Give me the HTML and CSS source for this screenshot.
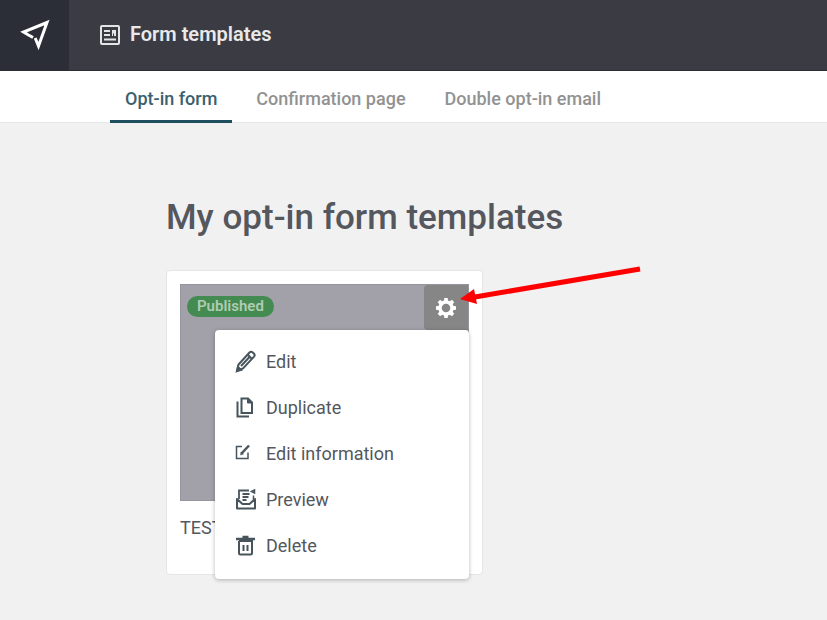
FILE: index.html
```html
<!DOCTYPE html>
<html lang="en">
<head>
<meta charset="utf-8">
<title>Form templates</title>
<link rel="stylesheet" href="styles.css">
</head>
<body>
<header class="topbar">
  <a class="brand" href="#" aria-label="Home">
    <svg width="32" height="32" viewBox="0 0 32 32" fill="none" stroke="#fff" stroke-width="3"><path d="M14 18.500 9.500 16 4.500 13 28 3.500 19.500 27 16.200 19"/></svg>
  </a>
  <div class="section">
    <svg width="20" height="20" viewBox="0 0 20 20" fill="none" stroke="#e4e4e6" stroke-width="2"><rect x="1" y="1" width="18" height="18" rx="1"/><path d="M4 6h6M4 10h6M4 14.500h12" /><path d="M12 5h4v6h-4z" fill="#e4e4e6" stroke="none"/><path d="M13.500 8.500v3" stroke="#3b3c43" stroke-width="1"/></svg>
    <span class="section-title">Form templates</span>
  </div>
</header>
<nav class="tabs">
  <a class="tab active" href="#">Opt-in form</a>
  <a class="tab" href="#">Confirmation page</a>
  <a class="tab" href="#">Double opt-in email</a>
</nav>
<main class="content">
  <h1>My opt-in form templates</h1>
  <article class="card">
    <div class="thumb">
      <span class="badge">Published</span>
      <button class="gear" aria-label="Template options">
        <svg width="22" height="22" viewBox="-11 -11 22 22"><g fill="#fff"><path id="tooth" d="M-2.200-6 -1.700-10H1.700L2.200-6z"/><use href="#tooth" transform="rotate(45)"/><use href="#tooth" transform="rotate(90)"/><use href="#tooth" transform="rotate(135)"/><use href="#tooth" transform="rotate(180)"/><use href="#tooth" transform="rotate(225)"/><use href="#tooth" transform="rotate(270)"/><use href="#tooth" transform="rotate(315)"/></g><circle r="6" fill="none" stroke="#fff" stroke-width="3.400"/></svg>
      </button>
    </div>
    <div class="name">TEST</div>
    <div class="menu">
      <button class="item"><svg width="22" height="24" viewBox="0 0 22 24" fill="none" stroke="#47545c" stroke-width="2"><path d="M2 22 3.500 15.500 14.500 3.500Q16 2 17.500 3.300L19 4.700Q20.300 6.200 19 7.700L8 19.500zM12.500 5.500l4.500 4.500M6 17 15 7.500"/><path d="M2 22l1-4 3 3z" fill="#47545c"/></svg>Edit</button>
      <button class="item"><svg width="22" height="24" viewBox="0 0 22 24" fill="none" stroke="#47545c" stroke-width="2"><path d="M6.500 3.500H13l4 4v10.500H6.500z"/><path d="M12.500 3.500v4.500H17z" fill="#47545c" stroke-width="1"/><path d="M2.500 6.500v15H14"/></svg>Duplicate</button>
      <button class="item"><svg width="22" height="24" viewBox="0 0 22 24" fill="none" stroke="#47545c" stroke-width="1.500"><path d="M7 5.500H1.500v12h11.500V11.500"/><path d="M6.500 12.500 14 4.500" stroke-width="2.500"/><path d="M5.500 14l.5-3 2.500 2z" fill="#47545c" stroke-width=".5"/></svg>Edit information</button>
      <button class="item"><svg width="22" height="24" viewBox="0 0 22 24" fill="none" stroke="#47545c" stroke-width="2"><path d="M2 12v9.500h18V12L14.500 17h-7z" stroke-linejoin="round"/><path d="M4 12V3.500h10M7.500 7h7M7.500 10h6M7.500 13h4" stroke-width="1.800"/><path d="M16.500 4.500 19.500 3v3zM18.500 8.500v4" stroke-width="1.500"/></svg>Preview</button>
      <button class="item"><svg width="22" height="24" viewBox="0 0 22 24" fill="none" stroke="#47545c" stroke-width="2"><path d="M1 6h19M7.500 4h6" stroke-width="2.500"/><path d="M4 8v12q0 1.500 1.500 1.500h10q1.500 0 1.500-1.500V8H4M8.500 12v6M12.500 12v6"/></svg>Delete</button>
    </div>
    <svg class="pointer" width="182" height="42" viewBox="0 0 182 42"><path d="M180 3 15 31" stroke="#fe0000" stroke-width="5"/><path d="M0 33 14 23 17 38z" fill="#fe0000"/></svg>
  </article>
</main>
</body>
</html>
```
FILE: styles.css
```css
* { box-sizing: border-box; }
body {
  margin: 0;
  min-height: 100vh;
  background: #f1f1f1;
  color: #54575d;
  font-family: Roboto, "Liberation Sans", sans-serif;
  font-size: 18px;
}
button { border: 0; background: none; font: inherit; color: inherit; padding: 0; }
a { text-decoration: none; color: inherit; }
svg { display: block; flex: none; }
.topbar {
  display: flex;
  height: 71px;
  background: #3b3c43;
  border-bottom: 1px solid #2c2e36;
}
.brand {
  display: flex;
  align-items: center;
  justify-content: center;
  width: 69px;
  background: #2c2e37;
}
.section {
  display: flex;
  align-items: center;
  gap: 10px;
  padding-left: 31px;
  color: #e9e9eb;
}
.section-title { font-size: 20px; font-weight: 600; line-height: 24px; padding-bottom: 2px; }
.tabs {
  display: flex;
  gap: 9px;
  height: 52px;
  padding-left: 110px;
  background: #fff;
  border-bottom: 1px solid #e6e6e6;
}
.tab {
  height: 52px;
  padding: 0 15px;
  font-weight: 500;
  line-height: 56px;
  color: #929292;
}
.tab.active { color: #39606d; border-bottom: 3px solid #1d4f5e; }
.content { padding: 73px 24px 44px 166px; }
h1 {
  margin: 0 0 30px;
  font-size: 35px;
  font-weight: 500;
  line-height: 44px;
}
.card {
  position: relative;
  width: 317px;
  padding: 13px;
  background: #fff;
  border: 1px solid #e5e5e5;
  border-radius: 4px;
}
.thumb {
  display: flex;
  align-items: flex-start;
  justify-content: space-between;
  height: 217px;
  background: #a2a1aa;
  border: 1px solid #96959d;
}
.badge {
  margin: 11px 6px;
  padding: 0 10px 1px;
  border-radius: 11px;
  background: #438b50;
  color: #b0ccb4;
  font-size: 15px;
  font-weight: 600;
  line-height: 20px;
}
.gear {
  display: flex;
  align-items: center;
  justify-content: center;
  width: 44px;
  height: 45px;
  background: #868686;
  border-radius: 4px 0 0 4px;
}
.name { padding: 16px 0 22px; line-height: 22px; }
.menu {
  position: absolute;
  top: 59px;
  right: 13px;
  width: 254px;
  padding: 8px 0 11px;
  background: #fff;
  border-radius: 4px;
  box-shadow: 0 1px 4px rgba(0, 0, 0, .28);
}
.item {
  display: flex;
  align-items: center;
  gap: 9px;
  width: 100%;
  height: 46px;
  padding-left: 20px;
}
.pointer { position: absolute; top: -5px; left: 293px; }
```
